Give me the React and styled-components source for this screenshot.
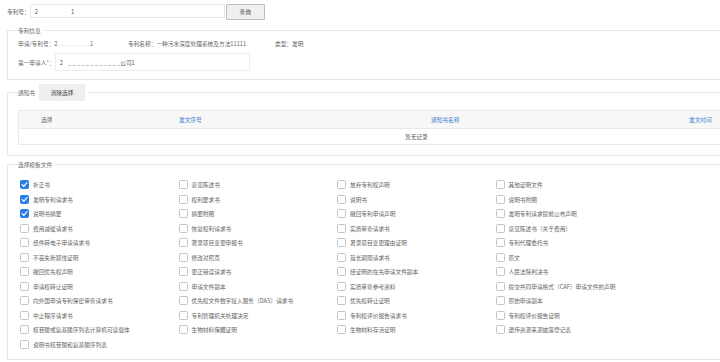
import React from "react";
import styled, { createGlobalStyle } from "styled-components";

const GlobalStyle = createGlobalStyle`
  html, body {
    margin: 0;
    padding: 0;
    background: #fff;
    overflow: hidden;
  }
  body {
    font-family: "Noto Sans CJK SC", "Noto Sans", sans-serif;
    font-size: 5.7px;
    color: #666;
  }
`;

const columns = [
  [
    ["补正书", true],
    ["发明专利请求书", true],
    ["说明书摘要", true],
    ["费用减缓请求书"],
    ["纸件转电子申请请求书"],
    ["不丧失新颖性证明"],
    ["撤回优先权声明"],
    ["申请权转让证明"],
    ["向外国申请专利保密审查请求书"],
    ["中止程序请求书"],
    ["核苷酸或氨基酸序列表计算机可读载体"],
    ["说明书核苷酸和氨基酸序列表"],
  ],
  [
    ["意见陈述书"],
    ["权利要求书"],
    ["摘要附图"],
    ["恢复权利请求书"],
    ["著录项目变更申报书"],
    ["修改对照页"],
    ["更正错误请求书"],
    ["申请文件副本"],
    ["优先权文件数字接入服务（DAS）请求书"],
    ["专利管理机关处理决定"],
    ["生物材料保藏证明"],
  ],
  [
    ["放弃专利权声明"],
    ["说明书"],
    ["撤回专利申请声明"],
    ["实质审查请求书"],
    ["著录项目变更理由证明"],
    ["延长期限请求书"],
    ["经证明的在先申请文件副本"],
    ["实质审查参考资料"],
    ["优先权转让证明"],
    ["专利权评价报告请求书"],
    ["生物材料存活证明"],
  ],
  [
    ["其他证明文件"],
    ["说明书附图"],
    ["发明专利请求提前公布声明"],
    ["意见陈述书（关于费用）"],
    ["专利代理委托书"],
    ["原文"],
    ["人民法院判决书"],
    ["提交共同申请格式（CAF）申请文件的声明"],
    ["原始申请副本"],
    ["专利权评价报告证明"],
    ["遗传资源来源披露登记表"],
  ],
];

export default function App() {
  const [checked, setChecked] = React.useState(() => {
    const map = {};
    columns.forEach((col) => col.forEach(([name, on]) => (map[name] = !!on)));
    return map;
  });

  function toggle(name) {
    setChecked((prev) => ({ ...prev, [name]: !prev[name] }));
  }

  function clearAll() {
    setChecked((prev) => {
      const next = {};
      Object.keys(prev).forEach((k) => (next[k] = false));
      return next;
    });
  }

  return (
    <Page>
      <GlobalStyle />
      <SearchRow>
        <span>专利号：</span>
        <SearchInput defaultValue={"2                          1"} />
        <QueryButton>查询</QueryButton>
      </SearchRow>

      <Group $top={6.5} $padTop={5.5} $padBottom={8}>
        <Legend>专利信息</Legend>
        <InfoRow>
          <InfoCell $width={110}>
            申请/专利号：2<Faint>. . . . . . . . . . . . . . . . . . . .</Faint>1
          </InfoCell>
          <InfoCell $width={147}>专利名称：一种污水深度处理系统及方法11111</InfoCell>
          <InfoCell>类型：发明</InfoCell>
        </InfoRow>
        <ApplicantRow>
          <span>
            第一申请人<Star>*</Star>：
          </span>
          <ApplicantInput defaultValue={"2    _ _ _ _ _ _ _ _ _ _ _ _公司1"} />
        </ApplicantRow>
      </Group>

      <Group $top={4} $padTop={9} $padBottom={10}>
        <Legend>
          <LegendText>通知书</LegendText>
          <TabButton onClick={clearAll}>清除选择</TabButton>
        </Legend>
        <Table>
          <HeadRow>
            <HeadCell $pad={22}>选择</HeadCell>
            <HeadCell $link>发文序号</HeadCell>
            <HeadCell $link>通知书名称</HeadCell>
            <HeadCell $link>发文时间</HeadCell>
          </HeadRow>
          <EmptyRow>暂无记录</EmptyRow>
        </Table>
      </Group>

      <Group $top={4.5} $padTop={8.75} $padBottom={8}>
        <Legend>选择模板文件</Legend>
        <CheckGrid>
          {columns.map((col, i) => (
            <CheckColumn key={i}>
              {col.map(([name]) => (
                <CheckItem key={name} onClick={() => toggle(name)}>
                  <Box $on={checked[name]}>
                    {checked[name] && (
                      <svg width="7" height="7" viewBox="0 0 10 10">
                        <path
                          d="M1.6 5.2 L4 7.6 L8.6 2.4"
                          fill="none"
                          stroke="#fff"
                          strokeWidth="1.8"
                          strokeLinecap="round"
                          strokeLinejoin="round"
                        />
                      </svg>
                    )}
                  </Box>
                  <span>{name}</span>
                </CheckItem>
              ))}
            </CheckColumn>
          ))}
        </CheckGrid>
      </Group>
    </Page>
  );
}

const Page = styled.div`
  width: 720px;
  padding: 4px 0 0 7px;
  box-sizing: border-box;
`;

const SearchRow = styled.div`
  display: flex;
  align-items: center;
  height: 16px;
  line-height: 8px;
`;

const SearchInput = styled.input`
  width: 195px;
  height: 14px;
  box-sizing: border-box;
  margin: 0 1px 2px 0;
  padding: 0 4px;
  border: 1px solid #e8e8e8;
  outline: none;
  font: inherit;
  color: #555;
  white-space: pre;
`;

const QueryButton = styled.button`
  width: 39px;
  height: 16px;
  padding: 0;
  border: 1px solid #bdbdbd;
  border-radius: 1px;
  background: #f0f0f0;
  font: inherit;
  color: #444;
  cursor: pointer;
`;

/* the panels run on past the right edge of the window, so no right border */
const Group = styled.fieldset`
  margin: ${(p) => p.$top}px 0 0;
  padding: ${(p) => p.$padTop}px 0 ${(p) => p.$padBottom}px 10px;
  border: 1px solid #e7e7e7;
  border-right: none;
  min-width: 0;
`;

const Legend = styled.legend`
  display: flex;
  align-items: center;
  padding: 0 3px 0 0;
  margin-left: 0;
  line-height: 8px;
  color: #666;
`;

const LegendText = styled.span`
  margin-right: 4px;
`;

const TabButton = styled.button`
  width: 46px;
  height: 17px;
  padding: 0;
  border: none;
  background: #efefef;
  font: inherit;
  color: #444;
  cursor: pointer;
`;

const InfoRow = styled.div`
  display: flex;
  line-height: 8px;
`;

const InfoCell = styled.div`
  flex: 0 0 ${(p) => (p.$width ? `${p.$width}px` : "auto")};
  white-space: nowrap;
`;

const Faint = styled.span`
  color: #cfcfcf;
  letter-spacing: -0.6px;
`;

const ApplicantRow = styled.div`
  display: flex;
  align-items: center;
  margin-top: 5px;
`;

const Star = styled.span`
  color: #e56a8a;
`;

const ApplicantInput = styled.input`
  width: 195px;
  height: 18px;
  box-sizing: border-box;
  padding: 0 4px;
  border: 1px solid #ececec;
  outline: none;
  font: inherit;
  color: #555;
`;

const Table = styled.div`
  border: 1px solid #e9e9e9;
  border-right: none;
`;

const HeadRow = styled.div`
  display: grid;
  grid-template-columns: 160px 252px 258px 1fr;
  height: 17px;
  align-items: center;
  background: #f7f7f7;
  border-bottom: 1px solid #e9e9e9;
`;

const HeadCell = styled.div`
  padding-left: ${(p) => p.$pad || 0}px;
  color: ${(p) => (p.$link ? "#3f7fd6" : "#666")};
  white-space: nowrap;
`;

const EmptyRow = styled.div`
  height: 15px;
  line-height: 15px;
  padding-left: 386px;
  color: #555;
`;

const CheckGrid = styled.div`
  display: grid;
  grid-template-columns: repeat(4, 158.5px);
  margin-left: 2px;
`;

const CheckColumn = styled.div`
  display: flex;
  flex-direction: column;
`;

const CheckItem = styled.label`
  display: flex;
  align-items: center;
  gap: 4px;
  height: 14.5px;
  color: #666;
  white-space: nowrap;
  cursor: pointer;
`;

const Box = styled.span`
  display: flex;
  align-items: center;
  justify-content: center;
  width: 9px;
  height: 9px;
  box-sizing: border-box;
  border-radius: 1.5px;
  border: 1px solid ${(p) => (p.$on ? "#2a7de8" : "#c4c4c4")};
  background: ${(p) => (p.$on ? "#2a7de8" : "#fff")};
  flex: 0 0 auto;
`;
